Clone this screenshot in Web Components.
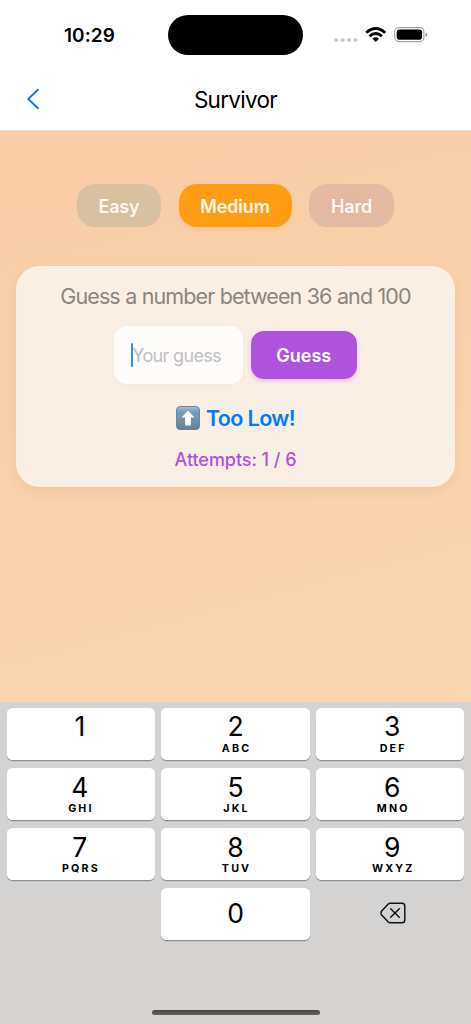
<!DOCTYPE html>
<html lang="en">
<head>
<meta charset="utf-8">
<meta name="viewport" content="width=device-width, initial-scale=1">
<title>Survivor</title>
<style>
    html, body { margin: 0; height: 100%; }
    body { font-family: Inter, "Liberation Sans", sans-serif; overflow: hidden; }
</style>
</head>
<body>
<survivor-app></survivor-app>

<script>
class SurvivorElement extends HTMLElement {
    constructor() {
        super();
        this.attachShadow({ mode: 'open' });
    }

    connectedCallback() {
        this.shadowRoot.innerHTML = this.render();
    }
}

class StatusBar extends SurvivorElement {
    render() {
        return `
        <style>
            :host {
                display: grid;
                grid-template-columns: 168px 135px 1fr;
                height: 70px;
                box-sizing: border-box;
                padding-top: 15px;
                color: #000;
            }
            .time {
                font-size: 19px;
                font-weight: 600;
                line-height: 42px;
                padding-left: 11px;
                text-align: center;
                letter-spacing: 0.1px;
            }
            .island { height: 39.5px; border-radius: 20px; background: #000; }
            .icons { padding-left: 31px; height: 40px; }
            svg { display: block; }
        </style>
        <div class="time">10:29</div>
        <div class="island"></div>
        <div class="icons">
            <svg width="96" height="40" viewBox="0 0 96 40">
                <g fill="#cbcbcb">
                    <circle cx="2.2" cy="25" r="2.1"/><circle cx="8.6" cy="25" r="2.1"/>
                    <circle cx="15" cy="25" r="2.1"/><circle cx="21.4" cy="25" r="2.1"/>
                </g>
                <g fill="none" stroke="#000" stroke-width="2.8">
                    <path d="M32.2 17.7 Q41.7 9.3 51.2 17.7"/>
                    <path d="M35.5 21.3 Q41.7 15.6 47.9 21.3"/>
                </g>
                <path d="M38.4 23.7 Q41.7 20.9 45 23.7 L41.7 27 Z"/>
                <rect x="60.7" y="12.6" width="29.2" height="14" rx="4.4" fill="none" stroke="#a2a2a2" stroke-width="1.1"/>
                <rect x="62.7" y="14.6" width="25.4" height="10.2" rx="2.8"/>
                <path d="M91.5 17.5 Q93.3 18 93.3 19.7 Q93.3 21.4 91.5 21.9 Z" fill="#999"/>
            </svg>
        </div>`;
    }
}

class NavBar extends SurvivorElement {
    render() {
        return `
        <style>
            :host {
                display: grid;
                grid-template-columns: 60px 1fr 60px;
                align-items: center;
                height: 61px;
                box-sizing: border-box;
                padding-bottom: 3px;
                border-bottom: 1px solid #e4dfdb;
            }
            svg { display: block; margin-left: 26px; }
            .title { text-align: center; font-size: 22.5px; letter-spacing: -0.7px; line-height: 30px; padding-top: 2px; }
        </style>
        <svg width="14" height="22" viewBox="0 0 14 22">
            <path d="M12 1.8 L2.2 11 L12 20.2" fill="none" stroke="#007aff" stroke-width="1.9" stroke-linecap="round" stroke-linejoin="round"/>
        </svg>
        <div class="title"><slot></slot></div>`;
    }
}

class DifficultyPill extends SurvivorElement {
    render() {
        return `
        <style>
            :host {
                display: block;
                height: 43px;
                border-radius: 18px;
                box-sizing: border-box;
                color: rgba(255, 255, 255, 0.9);
                font-size: 18px;
                font-weight: 600;
                line-height: 45px;
                text-align: center;
                letter-spacing: -0.15px;
            }
            :host([level="easy"]) { width: 84px; background: radial-gradient(#d5c19c, #dac1a2); }
            :host([level="medium"]) { width: 113px; }
            :host([level="hard"]) { width: 85px; background: radial-gradient(#e4b69e, #e3bda3); }
            :host([active]) {
                background: #ff9d14;
                color: #fff8ee;
                box-shadow: 0 2px 5px rgba(255, 149, 0, 0.2);
            }
        </style>
        <slot></slot>`;
    }
}

class GuessCard extends SurvivorElement {
    render() {
        return `
        <style>
            :host {
                display: flex;
                flex-direction: column;
                align-items: center;
                height: 221px;
                box-sizing: border-box;
                margin: 0 16px;
                padding-top: 15px;
                border-radius: 24px;
                background: #faefe4;
                box-shadow: 0 5px 12px rgba(160, 100, 50, 0.1), inset 0 0 22px #fdf0e5;
            }
            .prompt { font-size: 21.5px; line-height: 30px; color: #8b8581; letter-spacing: -0.9px; word-spacing: 0.2px; white-space: nowrap; }
            .row { display: flex; align-items: center; gap: 8px; margin-top: 15px; }
            .field {
                display: flex;
                align-items: center;
                width: 128.5px;
                height: 58px;
                box-sizing: border-box;
                padding-left: 17px;
                border-radius: 13px;
                background: #fefcfa;
                box-shadow: 0 2px 8px rgba(170, 120, 70, 0.04);
                font-size: 18px;
                letter-spacing: -0.65px;
                color: #c2c0bf;
                white-space: nowrap;
            }
            .caret { width: 2px; height: 24px; margin-right: -1px; border-radius: 1px; background: #2c8cf8; }
            .hint { padding-top: 2px; }
            .guess {
                width: 106px;
                height: 47.5px;
                border-radius: 13px;
                background: #af52de;
                color: #fff;
                font-size: 18px;
                font-weight: 600;
                line-height: 49px;
                text-align: center;
                box-shadow: 0 2px 5px rgba(175, 82, 222, 0.3);
            }
            .feedback {
                display: flex;
                align-items: center;
                gap: 6px;
                margin-top: 19px;
                font-size: 21.5px;
                font-weight: 600;
                line-height: 30px;
                letter-spacing: -0.6px;
                color: #007aff;
                white-space: nowrap;
            }
            .attempts { margin-top: 15px; font-size: 18px; font-weight: 550; line-height: 24px; letter-spacing: -0.05px; color: #af52de; white-space: nowrap; }
            svg { display: block; }
        </style>
        <div class="prompt">Guess a number between 36 and 100</div>
        <div class="row">
            <div class="field"><span class="caret"></span><span class="hint">Your guess</span></div>
            <div class="guess">Guess</div>
        </div>
        <div class="feedback">
            <svg width="24" height="24" viewBox="0 0 24 24" role="img">
                <defs>
                    <linearGradient id="tile" x1="0" y1="0" x2="0" y2="1">
                        <stop offset="0" stop-color="#a5c4dc"/>
                        <stop offset="0.2" stop-color="#7ea0bc"/>
                        <stop offset="1" stop-color="#637e98"/>
                    </linearGradient>
                </defs>
                <rect x="0.5" y="0.5" width="23" height="23" rx="3.6" fill="url(#tile)" stroke="#647d94" stroke-width="0.9"/>
                <path d="M12 4.6 L18.4 11.6 H14.9 V19.4 H9.1 V11.6 H5.6 Z" fill="#fff"/>
            </svg>
            <span class="verdict">Too Low!</span>
        </div>
        <div class="attempts">Attempts: 1 / 6</div>`;
    }
}

class KeypadKey extends SurvivorElement {
    render() {
        const digit = this.getAttribute('digit');
        const letters = this.getAttribute('letters') || '';
        return `
        <style>
            :host {
                display: flex;
                flex-direction: column;
                align-items: center;
                height: 52.3px;
                box-sizing: border-box;
                padding-top: 4.3px;
                border-radius: 5.5px;
                background: #fff;
                box-shadow: 0 1.2px 0 #929191;
                color: #000;
            }
            :host([digit="1"]), :host([digit="2"]), :host([digit="3"]) { padding-top: 2.5px; }
            :host([digit="1"]) .letters, :host([digit="2"]) .letters, :host([digit="3"]) .letters { margin-top: 0; }
            :host([digit="0"]) { padding-top: 10.3px; }
            /* outer columns lean a little towards the screen edges */
            :host([column="0"]) { padding-right: 2px; }
            :host([column="2"]) { padding-left: 4px; }
            .digit { font-size: 26.5px; line-height: 31px; }
            .letters { margin-top: -1px; font-size: 10.7px; font-weight: 650; line-height: 13px; letter-spacing: 2.15px; margin-right: -2.1px; }
        </style>
        <div class="digit">${digit}</div>
        ${letters ? `<div class="letters">${letters}</div>` : ''}`;
    }
}

class NumberPad extends SurvivorElement {
    render() {
        const keys = ['', 'ABC', 'DEF', 'GHI', 'JKL', 'MNO', 'PQRS', 'TUV', 'WXYZ'];
        return `
        <style>
            :host {
                display: flex;
                flex-direction: column;
                justify-content: space-between;
                align-items: center;
                height: 322.5px;
                box-sizing: border-box;
                padding: 6.5px 6.7px 9px;
                background: #d4d3d1;
            }
            .keys {
                display: grid;
                width: 100%;
                grid-template-columns: repeat(3, 1fr);
                column-gap: 6.3px;
                row-gap: 7.6px;
            }
            .delete { display: flex; align-items: center; justify-content: center; padding: 0 0 2px 5px; }
            .home { width: 168px; height: 5.5px; border-radius: 3px; background: linear-gradient(#474645, #656463); }
            svg { display: block; }
        </style>
        <div class="keys">
            ${keys.map((letters, i) => `<keypad-key digit="${i + 1}" column="${i % 3}" letters="${letters}"></keypad-key>`).join('')}
            <span></span>
            <keypad-key digit="0" column="1"></keypad-key>
            <div class="delete">
                <svg width="26" height="22" viewBox="0 0 26 22" fill="none" stroke="#111" stroke-width="1.45" stroke-linecap="round" stroke-linejoin="round">
                    <path d="M10.3 1.2 H22 Q24.8 1.2 24.8 4 V18 Q24.8 20.8 22 20.8 H10.3 Q9 20.8 8 19.8 L1.7 13 Q0.2 11 1.7 9 L8 2.2 Q9 1.2 10.3 1.2 Z"/>
                    <path d="M10.7 6.8 L19.3 15.2 M19.3 6.8 L10.7 15.2"/>
                </svg>
            </div>
        </div>
        <div class="home"></div>`;
    }
}

class SurvivorApp extends SurvivorElement {
    render() {
        return `
        <style>
            :host { display: flex; flex-direction: column; width: 471px; height: 1024px; background: #fff; }
            main { flex: 1; background: linear-gradient(165deg, #f9cda6, #fbd6b1); }
            .levels { display: flex; justify-content: center; gap: 17.5px; padding: 53.3px 0 38.7px; }
        </style>
        <status-bar></status-bar>
        <nav-bar>Survivor</nav-bar>
        <main>
            <div class="levels">
                <difficulty-pill level="easy">Easy</difficulty-pill>
                <difficulty-pill level="medium" active>Medium</difficulty-pill>
                <difficulty-pill level="hard">Hard</difficulty-pill>
            </div>
            <guess-card></guess-card>
        </main>
        <number-pad></number-pad>`;
    }
}

customElements.define('status-bar', StatusBar);
customElements.define('nav-bar', NavBar);
customElements.define('difficulty-pill', DifficultyPill);
customElements.define('guess-card', GuessCard);
customElements.define('keypad-key', KeypadKey);
customElements.define('number-pad', NumberPad);
customElements.define('survivor-app', SurvivorApp);
</script>
</body>
</html>
